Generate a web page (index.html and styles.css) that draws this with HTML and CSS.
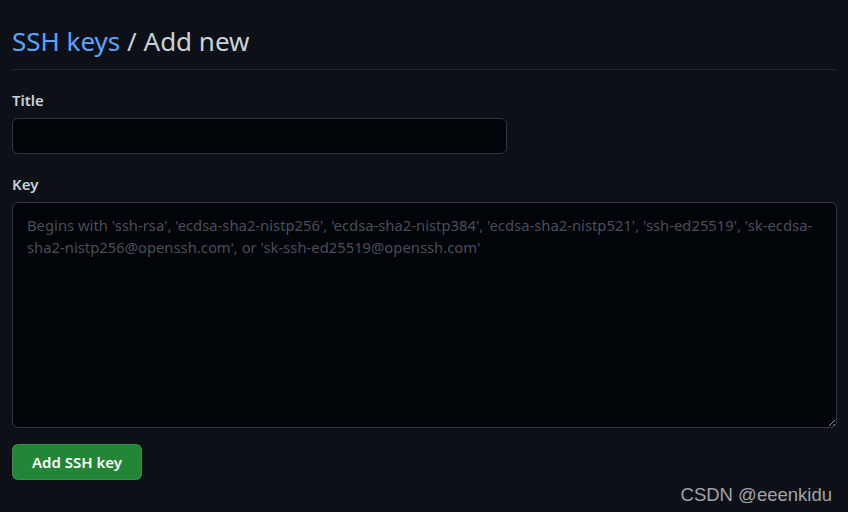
FILE: index.html
```html
<!DOCTYPE html>
<html lang="en">
<head>
<meta charset="utf-8">
<link rel="stylesheet" href="styles.css">
</head>
<body>
<main class="page">
  <div class="subhead">
    <h2 class="subhead-heading"><a class="crumb" href="#">SSH keys</a> / Add new</h2>
  </div>
  <form class="form">
    <div class="form-group">
      <label class="label" for="title">Title</label>
      <input class="input title-input" id="title" type="text">
    </div>
    <div class="form-group">
      <label class="label" for="key">Key</label>
      <textarea class="input key-input" id="key" placeholder="Begins with 'ssh-rsa', 'ecdsa-sha2-nistp256', 'ecdsa-sha2-nistp384', 'ecdsa-sha2-nistp521', 'ssh-ed25519', 'sk-ecdsa-sha2-nistp256@openssh.com', or 'sk-ssh-ed25519@openssh.com'"></textarea>
    </div>
    <div class="actions">
      <button class="btn-primary" type="button">Add SSH key</button>
    </div>
  </form>
  <div class="watermark">CSDN @eeenkidu</div>
</main>
</body>
</html>
```
FILE: styles.css
```css
* { box-sizing: border-box; }
html, body {
  margin: 0;
  background: #0d1117;
}
body {
  font-family: "Noto Sans", "Open Sans", sans-serif;
  color: #c9d1d9;
  font-size: 15px;
}
.page {
  padding: 0 12px;
  height: 512px;
  position: relative;
}
.subhead {
  padding-top: 23px;
  padding-bottom: 9px;
  border-bottom: 1px solid #21262d;
}
.subhead-heading {
  margin: 0;
  font-size: 26px;
  font-weight: 400;
  line-height: 37px;
  color: #c9d1d9;
}
.crumb {
  color: #58a6ff;
  text-decoration: none;
}
.form {
  display: flex;
  flex-direction: column;
}
.form-group {
  display: flex;
  flex-direction: column;
}
.label {
  font-weight: 600;
  font-size: 15px;
  line-height: 20px;
  color: #c9d1d9;
  margin-top: 20px;
  margin-bottom: 8px;
}
.input {
  background: #010409;
  border: 1px solid #30363d;
  border-radius: 6px;
  color: #c9d1d9;
  font-family: inherit;
  font-size: 15px;
  outline: none;
}
.title-input {
  width: 495px;
  height: 36px;
  padding: 5px 12px;
}
.key-input {
  width: 825px;
  height: 226px;
  padding: 11px 8px 11px 14px;
  font-size: 14.8px;
  line-height: 22px;
  resize: vertical;
}
.key-input::placeholder {
  color: #484f58;
}
.actions {
  margin-top: 16px;
}
.btn-primary {
  background: #238636;
  color: #ffffff;
  border: 1px solid rgba(240, 246, 252, 0.1);
  border-radius: 6px;
  font-family: inherit;
  font-size: 15px;
  font-weight: 600;
  height: 36px;
  padding: 0 19px;
}
.watermark {
  position: absolute;
  right: 16px;
  bottom: 6px;
  font-family: "Liberation Sans", sans-serif;
  font-size: 18.5px;
  color: #a0a3a8;
}
```
